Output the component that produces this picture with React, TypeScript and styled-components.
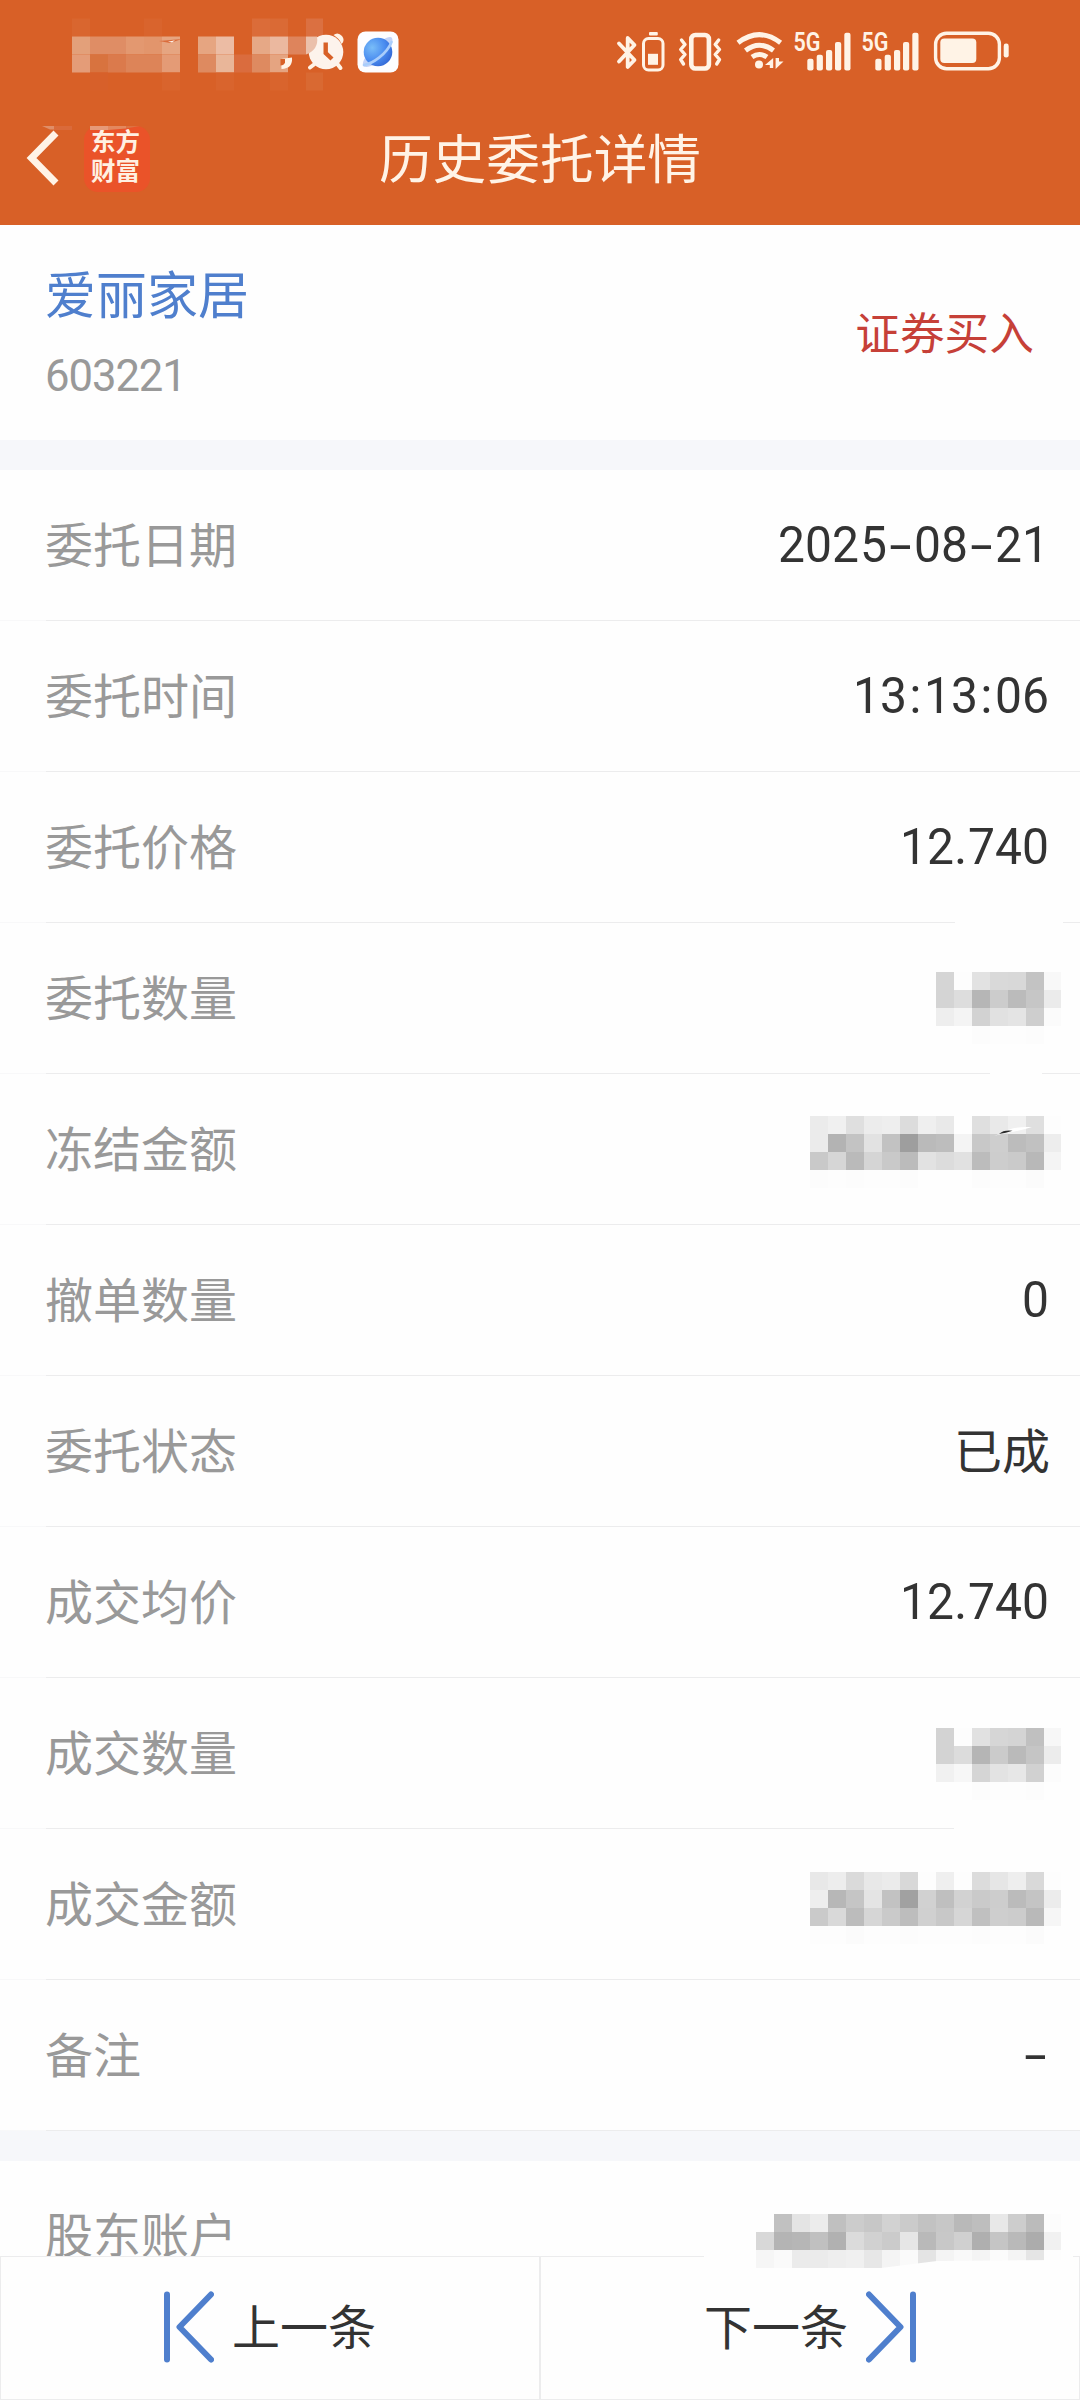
import React from "react";
import styled, { createGlobalStyle } from "styled-components";

const ORANGE = "#d86027";
const CREAM = "#fff3e6";
const BLUE = "#4f7fcd";
const INK = "#333333";
const MUTED = "#999999";
const LINE = "#ececed";

const GlobalStyle = createGlobalStyle`
  * { box-sizing: border-box; }
  body {
    margin: 0;
    background: #fefefe;
    font-family: Roboto, "Noto Sans CJK SC", sans-serif;
    -webkit-font-smoothing: antialiased;
  }
`;

const Screen = styled.div`
  width: 1080px;
  height: 2400px;
  display: flex;
  flex-direction: column;
  overflow: hidden;
  background: #fefefe;
`;

const Header = styled.header`
  position: relative;
  flex: none;
  height: 225px;
  background: ${ORANGE};
  color: ${CREAM};
`;

const StatusBar = styled.div`
  height: 92px;
  padding: 11px 71px 0 72px;
  display: flex;
  align-items: center;
  justify-content: space-between;
`;

const StatusGroup = styled.div`
  display: flex;
  align-items: center;
  height: 81px;
`;

const Icon = styled.svg<{ $ml?: number }>`
  display: block;
  flex: none;
  overflow: visible;
  position: relative;
  z-index: 3;
  margin-left: ${(p) => p.$ml ?? 0}px;
`;

const NavBar = styled.nav`
  height: 133px;
  padding: 0 26px;
  display: grid;
  grid-template-columns: 1fr auto 1fr;
  align-items: center;
`;

const NavStart = styled.div`
  display: flex;
  align-items: center;
  gap: 25px;
`;

const Title = styled.h1`
  margin: 0;
  padding-top: 4px;
  font-size: 53.7px;
  line-height: 80px;
  font-weight: 400;
`;

const Logo = styled.div`
  width: 66px;
  height: 66px;
  padding: 2px 3px 0 0;
  border-radius: 14px;
  background: #ea5329;
  color: #fff0e2;
  font-size: 24.5px;
  line-height: 29.5px;
  font-weight: 700;
  text-align: center;
`;

const Smudge = styled.svg<{ $x: number; $y: number }>`
  position: absolute;
  left: ${(p) => p.$x}px;
  top: ${(p) => p.$y}px;
`;

const Pixels = styled.div<{ $cols: number; $shift: number; $pull?: number; $clip?: string }>`
  position: relative;
  z-index: 2;
  display: grid;
  grid-template-columns: repeat(${(p) => p.$cols}, 18px) 17px;
  grid-auto-rows: 18px;
  transform: translateY(${(p) => p.$shift}px);
  margin-right: ${(p) => p.$pull ?? 0}px;
  clip-path: ${(p) => p.$clip ?? "none"};
`;

const Pixel = styled.span<{ $c: string }>`
  background: ${(p) => p.$c};
`;

const Stock = styled.section`
  flex: none;
  height: 215px;
  padding: 8px 46px 0 45px;
  display: flex;
  align-items: center;
  justify-content: space-between;
`;

const StockName = styled.div`
  font-size: 51px;
  line-height: 76px;
  color: ${BLUE};
`;

const StockCode = styled.div`
  margin-top: 3px;
  font-size: 45px;
  line-height: 76px;
  letter-spacing: -1.1px;
  transform: scaleX(0.97);
  transform-origin: 0 50%;
  color: ${MUTED};
`;

const Side = styled.div`
  padding-bottom: 3px;
  font-size: 44.7px;
  line-height: 66px;
  color: #c64038;
`;

const Gap = styled.div`
  flex: none;
  height: 30px;
  background: #f6f7fa;
`;

const Row = styled.div<{ $h?: number; $top?: number }>`
  flex: none;
  height: ${(p) => p.$h ?? 150}px;
  padding: ${(p) => p.$top ?? 0}px 30px 0 45px;
  display: flex;
  align-items: ${(p) => (p.$top ? "flex-start" : "center")};
  justify-content: space-between;
`;

const Divider = styled.div<{ $hide?: [number, number]; $inset?: number; $lead?: string }>`
  flex: none;
  height: 1px;
  background: ${(p) => {
    const i = p.$inset ?? 0;
    const [a, b] = p.$hide ?? [1080, 1080];
    const lead = p.$lead ?? "#f8f8f9";
    return `linear-gradient(90deg, ${lead} ${i}px, ${LINE} ${i}px, ${LINE} ${a}px, transparent ${a}px, transparent ${b}px, ${LINE} ${b}px)`;
  }};
`;

const Label = styled.span`
  padding-top: 4px;
  font-size: 48px;
  line-height: 72px;
  color: ${MUTED};
`;

const Value = styled.span<{ $han?: boolean }>`
  display: flex;
  padding-top: ${(p) => (p.$han ? 4 : 0)}px;
  padding-right: ${(p) => (p.$han ? 0 : 1)}px;
  font-size: ${(p) => (p.$han ? 48 : 50.5)}px;
  line-height: 72px;
  color: ${INK};
`;

const Glyph = styled.span<{ $w: number; $stretch?: number }>`
  width: ${(p) => p.$w}px;
  display: flex;
  justify-content: center;
  transform: scaleX(${(p) => p.$stretch ?? 1});
`;

const Pager = styled.footer`
  flex: none;
  height: 144px;
  display: flex;
  flex-direction: column;
  background: #fefefe;
  position: relative;
  z-index: 1;
`;

const PagerButtons = styled.div`
  flex: 1;
  display: grid;
  grid-template-columns: 540px 540px;
`;

const PagerButton = styled.button<{ $gap: number }>`
  display: flex;
  align-items: center;
  justify-content: center;
  gap: ${(p) => p.$gap}px;
  padding: 0 0 2px;
  border: solid ${LINE};
  border-width: 0 1px 1px 1px;
  background: none;
  font: inherit;
  color: ${INK};
`;

const PagerText = styled.span`
  padding-top: 3px;
  font-size: 48px;
  line-height: 72px;
`;

const _ = "transparent";

const STATUS_PIXELS: string[][] = [
  ["#d9662f", _, _, _, "#d9642d", _, _, _, _, _, "#db6c39", "#da6a35", _, "#db7041"],
  ["#e3a07a", "#df8d65", "#df8d65", "#e39870", "#e2956c", "#e6a581", _, "#e6a581", "#ecbca4", _, "#e6a886", "#ebb89f", "#de845c", _],
  ["#e49c78", "#d8733f", "#db7a4c", "#dd8458", "#dd8458", "#e49b76", _, "#de8a60", "#e9b699", "#da6c3e", "#de8a60", "#e5a481", _, _],
  [_, "#d7602a", _, _, _, "#d9642d", _, _, "#d9642d", _, _, "#d9642d", _, "#d96932"],
];

/** Expands "e6 f0 .." into neutral greys. */
const grey = (s: string) => s.split(" ").map((v) => (v === "--" ? _ : `#${v}${v}${v}`));

const QTY_A = [
  grey("d5 fd e2 d9 d8 c3 f8"),
  grey("d4 dd b6 cc bb c6 eb"),
  grey("ee f4 d2 e1 e4 ce fb"),
  grey("-- -- fc fd fd fc --"),
];
const QTY_B = [
  grey("d3 fd e1 d6 d4 c0 f7"),
  grey("d3 dc b5 cb ba c5 ec"),
  grey("f1 f7 d5 e3 e7 d1 fc"),
  grey("-- -- fc fd fd fc --"),
];
const SUM_A = [
  grey("eb f0 df ec ee dc ef e9 fe df e9 f0 df fd"),
  grey("eb b3 c3 e2 c2 9e ba bd f4 c8 ce bc c1 ed"),
  grey("c9 d6 ba d5 c9 bb e2 dc e1 bc cd ca b8 f4"),
  grey("fc fd fc fd fd fc -- -- -- fc fd fd fb --"),
];
const SUM_B = [
  grey("e8 ed da e8 eb d8 fd ef fd dc e6 ee d9 fd"),
  grey("ee b7 c5 e4 c2 a1 d1 bf d2 ca cd bb c4 ec"),
  grey("ca d9 bc d6 ca bd d0 c8 d6 c0 ce cc b9 f6"),
  grey("fd fd fb fd fd fc fd fd fd fc fd fd fb --"),
];
const ACCOUNT = [
  grey("fe c1 e4 ec c0 cc c7 d2 cb c2 c7 b9 be e8 cd bb fc"),
  grey("d8 b4 b6 c0 b1 db d1 cb e6 b9 c8 d0 af c5 b9 ac f1"),
  grey("f6 fa eb eb ee f0 e7 f4 fa e4 f4 f9 f4 fb f4 e5 fd"),
];

type PixelBlockProps = {
  data: string[][];
  shift: number;
  pull?: number;
  clip?: string;
  children?: React.ReactNode;
};

function PixelBlock({ data, shift, pull, clip, children }: PixelBlockProps) {
  return (
    <Pixels $cols={data[0].length - 1} $shift={shift} $pull={pull} $clip={clip} aria-hidden>
      {data.flatMap((row, y) => row.map((c, x) => <Pixel key={`${y}-${x}`} $c={c} />))}
      {children}
    </Pixels>
  );
}

const isHan = (ch: string) => ch > "\u2fff";

/** Sets digits on an even pitch with narrow cells for punctuation. */
function Figures({ text }: { text: string }) {
  if (isHan(text[0])) return <Value $han>{text}</Value>;
  return (
    <Value>
      {[...text].map((ch, i) => {
        if (ch === "-") return <Glyph key={i} $w={27} $stretch={1.6}>-</Glyph>;
        if (ch === ":") return <Glyph key={i} $w={16.8}>:</Glyph>;
        if (ch === ".") return <Glyph key={i} $w={14}>.</Glyph>;
        return <Glyph key={i} $w={27.1} $stretch={0.95}>{ch}</Glyph>;
      })}
    </Value>
  );
}

type Entry = { label: string; text?: string; pixels?: PixelBlockProps; hide?: [number, number] };

const Scratch = (
  <Smudge $x={182} $y={10} width="42" height="14" viewBox="992 1126 42 14">
    <path d="M994 1136 L1002 1133 Q1012 1126 1032 1127 Q1020 1131 1005 1133 Z" fill="#ffffff" />
    <path d="M999 1134 Q1004 1129.5 1012.5 1130.8 Q1006 1133 999 1134 Z" fill="#2a2a2a" />
  </Smudge>
);

const ENTRIES: Entry[] = [
  { label: "委托日期", text: "2025-08-21" },
  { label: "委托时间", text: "13:13:06" },
  { label: "委托价格", text: "12.740", hide: [955, 1063] },
  { label: "委托数量", pixels: { data: QTY_A, shift: 10, pull: -11 }, hide: [990, 1042] },
  { label: "冻结金额", pixels: { data: SUM_A, shift: 3, pull: -11, children: Scratch } },
  { label: "撤单数量", text: "0" },
  { label: "委托状态", text: "已成" },
  { label: "成交均价", text: "12.740" },
  { label: "成交数量", pixels: { data: QTY_B, shift: 11, pull: -11 }, hide: [954, 1080] },
  { label: "成交金额", pixels: { data: SUM_B, shift: 4, pull: -11 } },
  { label: "备注", text: "-" },
];

function AlarmIcon() {
  return (
    <Icon $ml={-21} width="44" height="42" viewBox="302 30.5 44 42">
      <path d="M333.5 34.5 Q338 31 342 35.5 Q345.5 40 341.5 43.5 Q339.5 38 333.5 34.5 Z" fill={CREAM} />
      <path d="M314 64 L310 67 M337 63 L340.5 67.5" stroke={CREAM} strokeWidth="4" strokeLinecap="round" />
      <circle cx="326" cy="51.5" r="17.3" fill="#fdf3ec" />
      <path d="M306 36 H317 Q319 49 306 54 Z" fill="#ebc0ab" />
      <path d="M325.7 42 V52.5 L332 58.5" fill="none" stroke={ORANGE} strokeWidth="4.4" />
      <path d="M281 58.5 L292 57 Q293 68 281.5 68.5 Z" fill={CREAM} />
      <path d="M280.5 58.5 H285 V62 Q284 65 280.5 65 Z" fill={ORANGE} />
      <path d="M159 40.4 L182 38.5 L170 42.5 Z" fill="#da6c3c" />
      <path d="M168 41.2 L175 39.8 L172 41.9 Z" fill="#fdf3ec" />
    </Icon>
  );
}

function BrowserIcon() {
  return (
    <Icon $ml={11} width="42" height="42" viewBox="0 0 42 42">
      <defs>
        <radialGradient id="planet" cx="0.3" cy="0.35" r="0.8">
          <stop offset="0" stopColor="#79bdf8" />
          <stop offset="0.55" stopColor="#4b8df0" />
          <stop offset="1" stopColor="#2f62d2" />
        </radialGradient>
      </defs>
      <rect x="0.5" y="0.5" width="41" height="41" rx="8" fill="#fdfdff" />
      <path d="M6 35 C5 29 10 24 16 17 C24 9 33 4 35 7 C37 11 33 20 26 27 C19 34 10 38 6 35 Z" fill="#c3d3f8" />
      <circle cx="21" cy="21" r="14.3" fill="url(#planet)" />
      <path d="M7 34 C15 33 30 23 34.5 11" fill="none" stroke="#a9cdfb" strokeWidth="2.6" strokeLinecap="round" />
    </Icon>
  );
}

function Signal({ ml }: { ml: number }) {
  const bars: [number, number][] = [[807.3, 57.7], [816.7, 53.7], [826, 49], [835, 41], [844.3, 31.7]];
  return (
    <Icon $ml={ml} width="58" height="62" viewBox="793 20 58 62" fill={CREAM}>
      <text
        transform="translate(793.6 50) scale(0.86 1)"
        fontSize="25"
        fontWeight="600"
        fontFamily="Roboto, sans-serif"
      >
        5G
      </text>
      {bars.map(([x, y]) => (
        <rect key={x} x={x} y={y} width="6.2" height={69.4 - y} rx="2" />
      ))}
    </Icon>
  );
}

function SystemIcons() {
  return (
    <StatusGroup>
      <Icon width="50" height="42" viewBox="617 31 50 42" fill="none" stroke={CREAM}>
        <path d="M619 43.5 L634.5 60 L627.7 67 V38 L634.5 45 L619 61.5" strokeWidth="3.8" strokeLinejoin="round" strokeLinecap="round" />
        <rect x="643.5" y="38.5" width="19.5" height="31.5" rx="5" strokeWidth="3" />
        <rect x="649" y="32" width="8.8" height="3.4" rx="1" fill={CREAM} stroke="none" />
        <rect x="648" y="53.8" width="10" height="11" fill={CREAM} stroke="none" />
      </Icon>
      <Icon $ml={11} width="44" height="42" viewBox="678 31 44 42" fill="none" stroke={CREAM}>
        <rect x="691.3" y="35" width="17.6" height="33.5" rx="4" strokeWidth="4.6" />
        <path d="M681.5 40 L685 44.5 L680.7 49.5 L685 54.5 L680.7 59.5 L683.5 64 M718.7 40 L715.2 44.5 L719.5 49.5 L715.2 54.5 L719.5 59.5 L716.7 64" strokeWidth="3.4" strokeLinecap="round" strokeLinejoin="round" />
      </Icon>
      <Icon $ml={13} width="49" height="42" viewBox="735 31 49 42" fill="none" stroke={CREAM}>
        <path d="M738 42.8 Q759.3 26.5 780.6 42.8 M745.5 50.5 Q759.3 40 773.5 50.5 M752 57 Q759.3 52 767 57" strokeWidth="5" />
        <circle cx="759" cy="64.6" r="4" fill={CREAM} stroke="none" />
        <path d="M773.2 58 V68 H769.8 V65 H765 Z M775.6 58 H779 V61.5 H783.5 L775.6 69 Z" fill={CREAM} stroke="none" />
      </Icon>
      <Signal ml={9} />
      <Signal ml={10.3} />
      <Icon $ml={12.7} width="77" height="42" viewBox="932 31 77 42" fill={CREAM}>
        <rect x="935.6" y="33.3" width="63.8" height="35.4" rx="11" fill="none" stroke={CREAM} strokeWidth="3.4" />
        <rect x="940.3" y="38.6" width="36" height="24.3" rx="4" />
        <rect x="1003.7" y="43.6" width="5" height="14" rx="2.3" />
      </Icon>
    </StatusGroup>
  );
}

const StepIcon = ({ flip }: { flip?: boolean }) => (
  <svg width="50" height="72" viewBox="0 0 50 72" fill="none" stroke={BLUE} strokeWidth="6" strokeLinecap="round" strokeLinejoin="round">
    <g transform={flip ? "matrix(-1 0 0 1 50 0)" : undefined}>
      <path d="M3 3.5 V68.5" />
      <path d="M47 3.5 L15.5 36 L47 68.5" />
    </g>
  </svg>
);

export default function App() {
  return (
    <Screen>
      <GlobalStyle />
      <Header>
        <StatusBar>
          <StatusGroup>
            <PixelBlock data={STATUS_PIXELS} shift={2.5} />
            <AlarmIcon />
            <BrowserIcon />
          </StatusGroup>
          <SystemIcons />
        </StatusBar>
        <NavBar>
          <NavStart>
            <svg width="33" height="58" viewBox="26 129.5 33 58" fill="none" stroke={CREAM} strokeWidth="7">
              <path d="M56 132.5 L31.5 157.5 L56 182.5" />
            </svg>
            <Logo>
              东方
              <br />
              财富
            </Logo>
          </NavStart>
          <Title>历史委托详情</Title>
        </NavBar>
        <Smudge $x={42} $y={126} width="100" height="5" viewBox="42 126 100 5" aria-hidden>
          <path d="M42 126 H54 V129.5 H50 Z" fill="#e08e68" />
          <path d="M54 126 H72 V130 H54 Z" fill="#da6a3a" />
          <path d="M90 126 H108 V130 H90 Z" fill="#e69a78" />
          <path d="M108 126 H126 V128.5 L108 130 Z" fill="#e3885f" />
          <path d="M126 126 H140 L126 128.5 Z" fill="#dc7242" />
        </Smudge>
      </Header>

      <Stock>
        <div>
          <StockName>爱丽家居</StockName>
          <StockCode>603221</StockCode>
        </div>
        <Side>证券买入</Side>
      </Stock>
      <Gap />

      {ENTRIES.map((e) => (
        <React.Fragment key={e.label}>
          <Row>
            <Label>{e.label}</Label>
            {e.pixels ? <PixelBlock {...e.pixels} /> : <Figures text={e.text ?? ""} />}
          </Row>
          <Divider $inset={46} $hide={e.hide} />
        </React.Fragment>
      ))}
      <Gap />

      <Row $h={95} $top={36}>
        <Label>股东账户</Label>
        <PixelBlock
          data={ACCOUNT}
          shift={17}
          pull={-11}
          clip="polygon(0 0, 100% 0, 100% 46px, 181px 47px, 125px 54px, 0 54px)"
        />
      </Row>

      <Pager>
        <Divider $hide={[704, 1073]} $lead={LINE} />
        <PagerButtons>
          <PagerButton $gap={18}>
            <StepIcon />
            <PagerText>上一条</PagerText>
          </PagerButton>
          <PagerButton $gap={18}>
            <PagerText>下一条</PagerText>
            <StepIcon flip />
          </PagerButton>
        </PagerButtons>
      </Pager>
    </Screen>
  );
}
